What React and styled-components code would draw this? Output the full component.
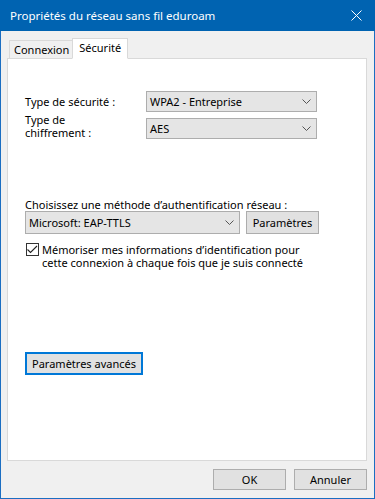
import React from "react";
import styled, { createGlobalStyle } from "styled-components";

const Global = createGlobalStyle`
  body {
    margin: 0;
    font-family: "Noto Sans", "Open Sans", sans-serif;
    font-size: 11px;
    line-height: 13px;
    color: #000;
  }
`;

const Window = styled.div`
  width: 375px;
  height: 499px;
  box-sizing: border-box;
  border: 1px solid #1b6ec2;
  border-top: none;
  background: #f0f0f0;
  display: flex;
  flex-direction: column;
`;

const TitleBar = styled.div`
  height: 31px;
  margin: 0 -1px;
  background: #0063b1;
  color: #fff;
  display: flex;
  align-items: center;
  justify-content: space-between;
  padding: 0 11px 0 10px;
  font-size: 11.5px;
`;

const Close = styled.svg`
  width: 11px;
  height: 11px;
  margin-right: 2px;
`;

const Body = styled.div`
  flex: 1;
  display: flex;
  flex-direction: column;
  padding: 7px 7px 0 6px;
`;

const Tabs = styled.div`
  display: flex;
  align-items: flex-end;
  padding-left: 2px;
  height: 20px;
  position: relative;
  z-index: 1;
`;

const Tab = styled.div`
  box-sizing: border-box;
  height: ${(p) => (p.$active ? "21px" : "18px")};
  padding: ${(p) => (p.$active ? "2px 6px 0 6px" : "2px 3px 0 4px")};
  border: 1px solid #d9d9d9;
  border-bottom: ${(p) => (p.$active ? "1px solid #fff" : "none")};
  margin-left: ${(p) => (p.$active ? "-1px" : "0")};
  background: ${(p) => (p.$active ? "#fff" : "#f0f0f0")};
  margin-bottom: ${(p) => (p.$active ? "-1px" : "0")};
`;

const Panel = styled.div`
  height: 403px;
  box-sizing: border-box;
  border: 1px solid #d9d9d9;
  background: #fff;
  padding: 32px 17px 0 17px;
  display: flex;
  flex-direction: column;
`;

const FieldRow = styled.div`
  display: flex;
  align-items: ${(p) => (p.$bottom ? "flex-end" : "center")};
  margin-bottom: ${(p) => p.$gap || 0}px;
`;

const Label = styled.div`
  width: 121px;
`;

const Select = styled.div`
  box-sizing: border-box;
  width: ${(p) => p.$w}px;
  height: ${(p) => p.$h || 21}px;
  border: 1px solid #adadad;
  background: #e5e5e5;
  display: flex;
  align-items: center;
  justify-content: space-between;
  padding: 0 5px 0 3px;
`;

const Chevron = () => (
  <svg width="9" height="5" viewBox="0 0 9 5">
    <path d="M0.5 0.5 L4.5 4.5 L8.5 0.5" fill="none" stroke="#555" strokeWidth="1" />
  </svg>
);

const Text = styled.div`
  margin-top: ${(p) => p.$top || 0}px;
`;

const MethodRow = styled.div`
  display: flex;
  gap: 6px;
`;

const Button = styled.div`
  box-sizing: border-box;
  width: ${(p) => p.$w}px;
  height: ${(p) => p.$h || 21}px;
  border: ${(p) => (p.$focus ? "2px solid #0078d7" : "1px solid #adadad")};
  background: #e1e1e1;
  display: flex;
  align-items: center;
  justify-content: center;
`;

const CheckRow = styled.div`
  display: flex;
  gap: 3px;
  margin-top: 9px;
  margin-left: 1px;
`;

const Box = styled.div`
  box-sizing: border-box;
  width: 13px;
  height: 13px;
  flex: none;
  border: 1px solid #333;
  background: #fff;
  display: flex;
  align-items: center;
  justify-content: center;
`;

const Footer = styled.div`
  display: flex;
  justify-content: flex-end;
  gap: 8px;
  padding-top: 8px;
`;

export default function App() {
  return (
    <>
      <Global />
      <Window>
        <TitleBar>
          <span>Propriétés du réseau sans fil eduroam</span>
          <Close viewBox="0 0 11 11">
            <path d="M0.5 0.5 L10.5 10.5 M10.5 0.5 L0.5 10.5" stroke="#fff" strokeWidth="1" />
          </Close>
        </TitleBar>
        <Body>
          <Tabs>
            <Tab>Connexion</Tab>
            <Tab $active>Sécurité</Tab>
          </Tabs>
          <Panel>
            <FieldRow $gap={1}>
              <Label>Type de sécurité :</Label>
              <Select $w={171}>
                <span>WPA2 - Entreprise</span>
                <Chevron />
              </Select>
            </FieldRow>
            <FieldRow $bottom>
              <Label>
                Type de
                <br />
                chiffrement :
              </Label>
              <Select $w={171}>
                <span>AES</span>
                <Chevron />
              </Select>
            </FieldRow>
            <Text $top={59}>Choisissez une méthode d’authentification réseau :</Text>
            <MethodRow>
              <Select $w={215} $h={23}>
                <span>Microsoft: EAP-TTLS</span>
                <Chevron />
              </Select>
              <Button $w={73} $h={23}>Paramètres</Button>
            </MethodRow>
            <CheckRow>
              <Box>
                <svg width="11" height="9" viewBox="0 0 11 9">
                  <path d="M0.5 4.5 L3.5 7.5 L10 1" fill="none" stroke="#222" strokeWidth="1.1" />
                </svg>
              </Box>
              <span>
                Mémoriser mes informations d’identification pour
                <br />
                cette connexion à chaque fois que je suis connecté
              </span>
            </CheckRow>
            <Text $top={83}>
              <Button $w={118} $h={23} $focus>Paramètres avancés</Button>
            </Text>
          </Panel>
          <Footer>
            <Button $w={73}>OK</Button>
            <Button $w={73}>Annuler</Button>
          </Footer>
        </Body>
      </Window>
    </>
  );
}
